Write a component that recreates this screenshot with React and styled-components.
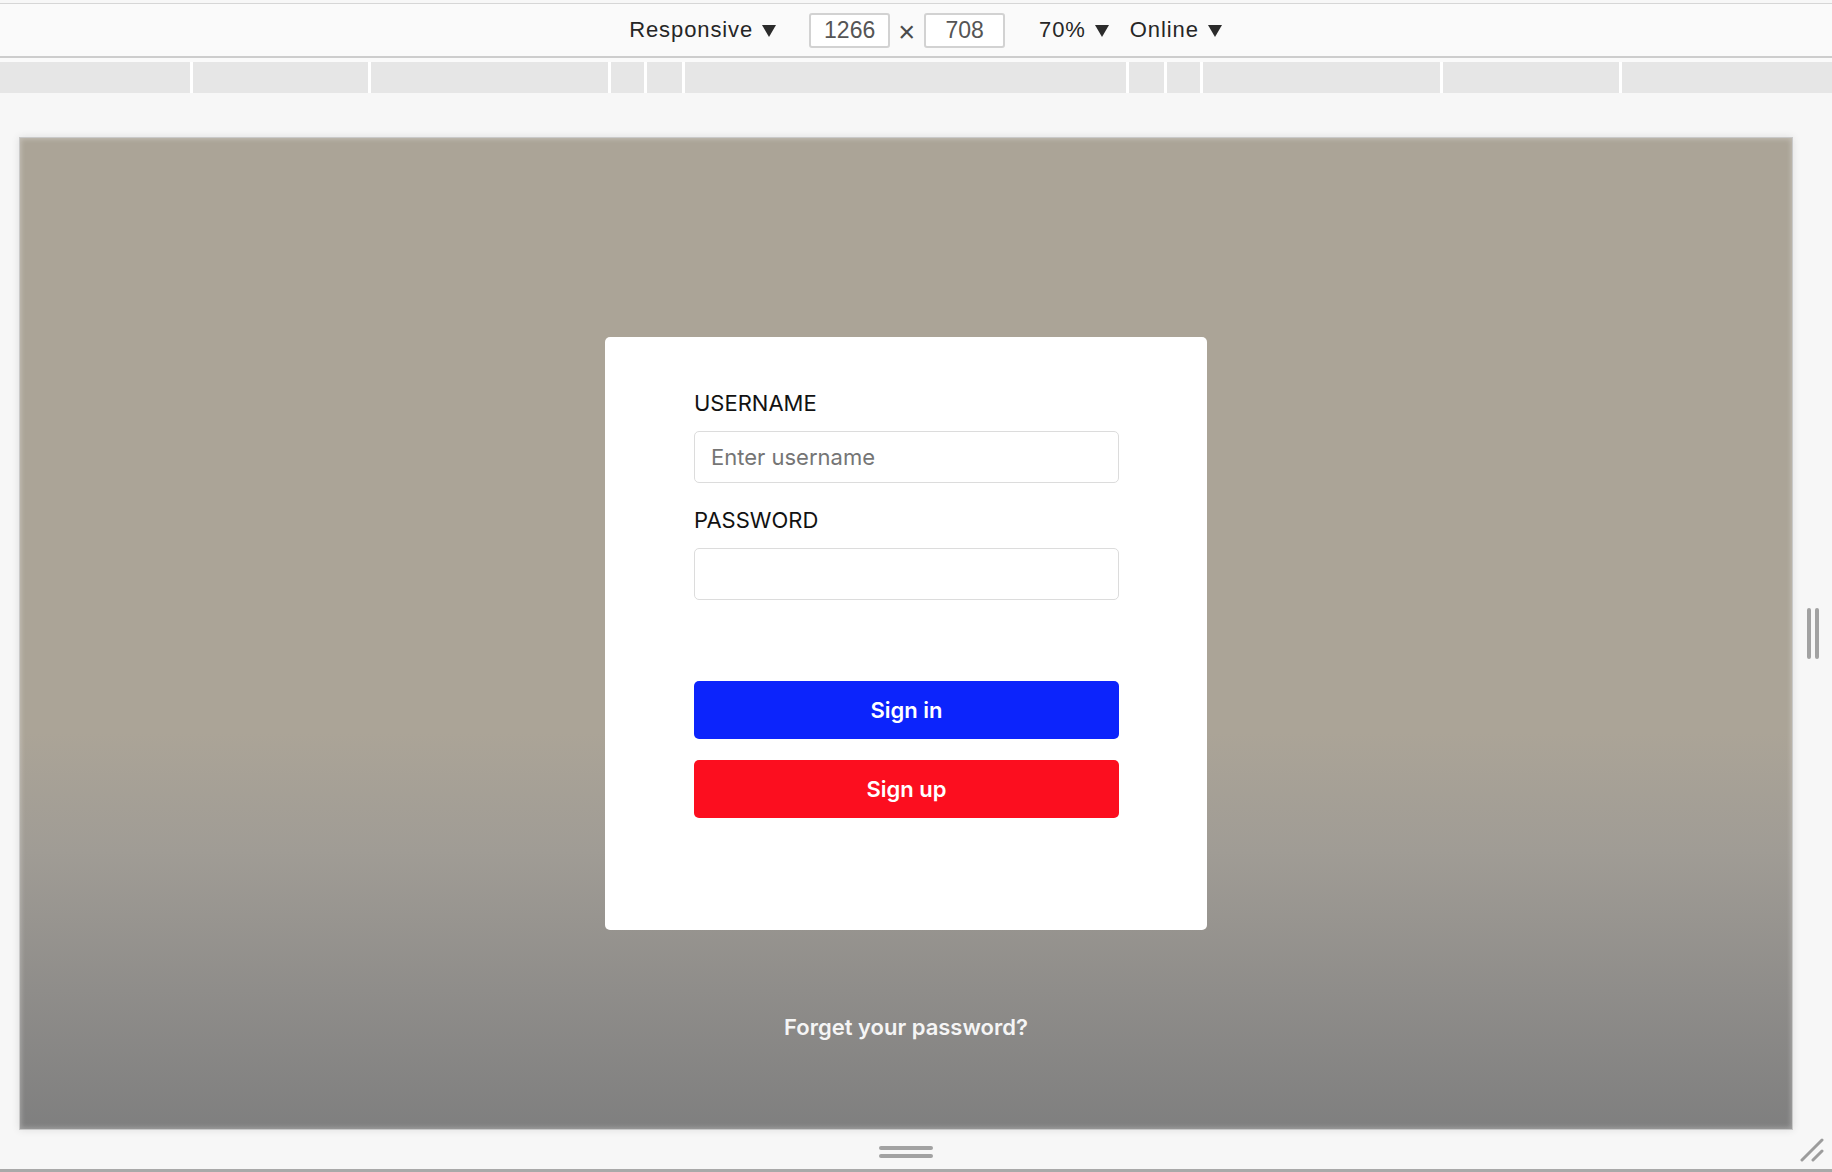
import styled, { createGlobalStyle } from "styled-components"

const GlobalStyle = createGlobalStyle`
  html, body {
    margin: 0;
    padding: 0;
  }
  body {
    background: #f7f7f7;
    font-family: "Liberation Sans", Arial, sans-serif;
  }
`

const Page = styled.div`
  display: flex;
  flex-direction: column;
  height: 1172px;
  overflow: hidden;
`
const TopBar = styled.div`
  display: flex;
  align-items: center;
  justify-content: center;
  height: 52px;
  margin-top: 3px;
  padding-left: 19px;

  background: #fafafa;
  border-top: 1px solid #d6d6d6;
  border-bottom: 2px solid #cdcdcd;
  color: #262626;
  font-size: 22px;
`
const Select = styled.div`
  display: flex;
  align-items: center;
  gap: 9px;
  margin: ${({ $margin }) => $margin || "0"};
  letter-spacing: 0.9px;
`
const Caret = styled.span`
  width: 0;
  height: 0;
  margin-top: 1px;
  border-left: 7px solid transparent;
  border-right: 7px solid transparent;
  border-top: 12px solid #2b2b2b;
`
const SizeBox = styled.div`
  display: flex;
  align-items: center;
  justify-content: center;
  width: 81px;
  height: 35px;
  box-sizing: border-box;
  margin-left: ${({ $offset }) => $offset || 0}px;

  background: #fff;
  border: 2px solid #d2d2d2;
  border-radius: 3px;
  color: #555;
  font-size: 23px;
`
const Times = styled.span`
  margin: 5px 9px 0 8px;
  color: #4a4a4a;
  font-size: 29px;
  line-height: 1;
`
const Spacer = styled.div`
  height: 4px;
  background: #fafafa;
`
const Ruler = styled.div`
  display: flex;
  height: 31px;
  background: #e6e6e6;
`
const RulerCell = styled.div`
  flex: ${({ $w }) => ($w ? `0 0 ${$w}px` : "1 1 auto")};
  box-sizing: border-box;
  border-left: ${({ $first }) => ($first ? "none" : "3px solid #fff")};
`
const Stage = styled.div`
  display: grid;
  grid-template-columns: 19px 1774px 1fr;
  grid-template-rows: 993px 39px;
  padding-top: 44px;
  background: #f7f7f7;
`
const Viewport = styled.div`
  grid-column: 2;
  display: flex;
  flex-direction: column;
  align-items: center;
  box-sizing: border-box;
  padding-top: 199px;

  background: linear-gradient(
    180deg,
    #aba497 0%,
    #aba497 60%,
    #a09c95 72%,
    #8f8d8a 86%,
    #7f7f7f 100%
  );
  border: 1px solid #c9c9c9;
  box-shadow: 0 0 8px rgba(0, 0, 0, 0.1),
    inset 0 0 5px 1px rgba(255, 255, 255, 0.3);
  font-family: Inter, "Noto Sans", sans-serif;
`
const Card = styled.form`
  width: 602px;
  box-sizing: border-box;
  padding: 50px 88px 112px 89px;

  background: #fff;
  border-radius: 5px;
`
const Field = styled.div`
  & + & {
    margin-top: 21px;
  }
`
const Label = styled.label`
  display: block;
  margin-bottom: 11px;

  color: #121212;
  font-size: 22px;
  line-height: 33px;
`
const Input = styled.input`
  display: block;
  width: 100%;
  height: 52px;
  box-sizing: border-box;
  margin: 0;
  padding: 0 16px;

  border: 1.5px solid #dcdcdc;
  border-radius: 5px;
  font-family: inherit;
  font-size: 22px;
  color: #333;
  outline: none;

  ::placeholder {
    color: #8a9199;
  }
`
const Actions = styled.div`
  display: flex;
  flex-direction: column;
  gap: 21px;
  margin-top: 81px;
`
const Button = styled.button`
  display: block;
  width: 100%;
  height: 58px;
  margin: 0;

  background: ${({ $bg }) => $bg};
  border: none;
  border-radius: 5px;
  color: #fff;
  font-family: inherit;
  font-size: 22px;
  font-weight: 600;
  cursor: pointer;
`
const Forgot = styled.a`
  margin-top: 81px;
  color: #f5f5f5;
  font-size: 22px;
  font-weight: 600;
  line-height: 33px;
  text-decoration: none;
`
const SideHandle = styled.div`
  display: flex;
  align-items: center;
  justify-content: center;
  gap: 4px;
`
const Bar = styled.span`
  display: block;
  width: ${({ $vertical }) => ($vertical ? "4px" : "54px")};
  height: ${({ $vertical }) => ($vertical ? "51px" : "4px")};
  background: #a2a2a2;
  border-radius: 2px;
`
const BottomHandle = styled.div`
  grid-column: 2;
  display: flex;
  flex-direction: column;
  align-items: center;
  gap: 4px;
  padding-top: 16px;
`
const Grip = styled.div`
  padding: 8px 0 0 7px;
`
const BottomLine = styled.div`
  height: 3px;
  background: #a9a9a9;
`

const breakpoints = [190, 178, 240, 36, 38, 444, 38, 36, 240, 179]

export default function App() {
  return (
    <Page>
      <GlobalStyle />
      <TopBar>
        <Select>
          Responsive <Caret />
        </Select>
        <SizeBox $offset={33}>1266</SizeBox>
        <Times>×</Times>
        <SizeBox>708</SizeBox>
        <Select $margin="0 0 0 34px">
          70% <Caret />
        </Select>
        <Select $margin="0 0 0 21px">
          Online <Caret />
        </Select>
      </TopBar>
      <Spacer />
      <Ruler>
        {breakpoints.map((w, i) => (
          <RulerCell key={i} $w={w} $first={i === 0} />
        ))}
        <RulerCell />
      </Ruler>
      <Stage>
        <Viewport>
          <Card onSubmit={(e) => e.preventDefault()}>
            <Field>
              <Label htmlFor="username">USERNAME</Label>
              <Input id="username" type="text" placeholder="Enter username" />
            </Field>
            <Field>
              <Label htmlFor="password">PASSWORD</Label>
              <Input id="password" type="password" />
            </Field>
            <Actions>
              <Button type="submit" $bg="#0c24fc">
                Sign in
              </Button>
              <Button type="button" $bg="#fc0e1f">
                Sign up
              </Button>
            </Actions>
          </Card>
          <Forgot href="#">Forget your password?</Forgot>
        </Viewport>
        <SideHandle>
          <Bar $vertical />
          <Bar $vertical />
        </SideHandle>
        <BottomHandle>
          <Bar />
          <Bar />
        </BottomHandle>
        <Grip>
          <svg width="24" height="24" viewBox="0 0 24 24">
            <g stroke="#9c9c9c" strokeWidth="3" strokeLinecap="round">
              <line x1="2" y1="22" x2="22" y2="2" />
              <line x1="13" y1="22" x2="22" y2="13" />
            </g>
          </svg>
        </Grip>
      </Stage>
      <BottomLine />
    </Page>
  )
}
